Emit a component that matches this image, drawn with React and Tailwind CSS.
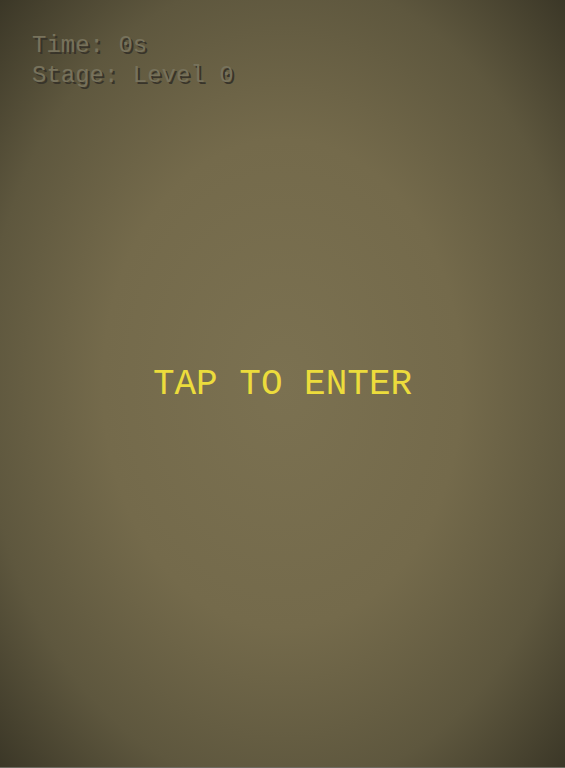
export default function App() {
  return (
    <div className="w-[565px] h-[768px] flex flex-col">
      <div className="relative flex-1 flex flex-col bg-[radial-gradient(ellipse_at_center,#7b7151_0%,#746a4b_45%,#5e573e_75%,#3b3727_100%)] font-['Courier_New','Nimbus_Mono_PS','FreeMono',Courier,monospace]">
        <div className="pt-[31px] pl-[32px] text-[24px] leading-[30px] text-[#77725c] [text-shadow:2px_2px_0_#38342a]">
          <p>Time: 0s</p>
          <p>Stage: Level 0</p>
        </div>
        <div className="flex-1 flex items-center justify-center pb-[88px]">
          <p className="text-[36px] leading-none text-[#ecdc3c]">TAP TO ENTER</p>
        </div>
      </div>
      <div className="h-px bg-[#6e6c62]" />
    </div>
  );
}
